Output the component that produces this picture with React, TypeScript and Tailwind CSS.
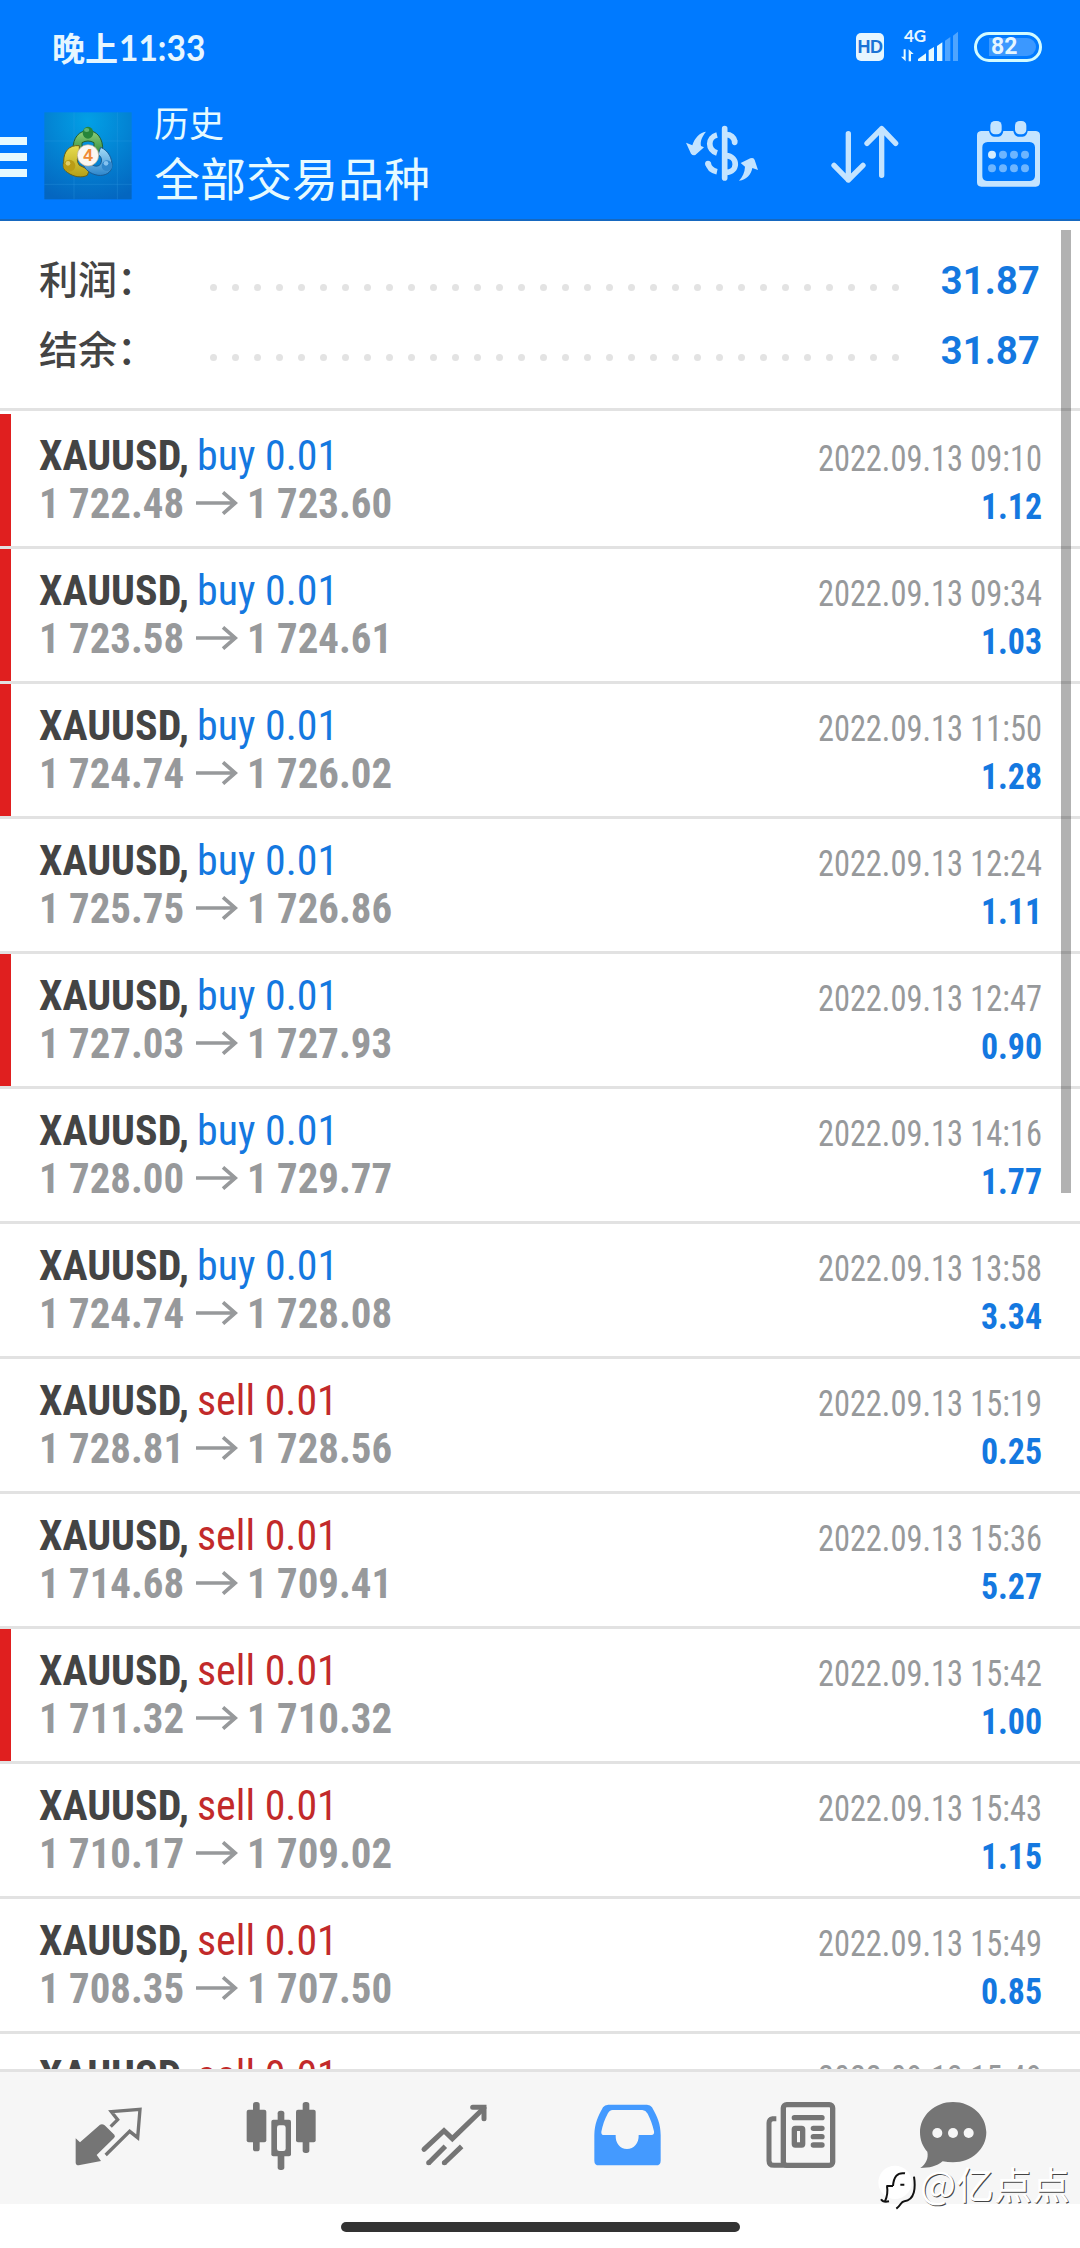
type TDeal = {
  side: "buy" | "sell";
  open: string;
  close: string;
  time: string;
  profit: string;
  marked?: boolean;
};

const deals: TDeal[] = [
  { side: "buy", open: "1 722.48", close: "1 723.60", time: "2022.09.13 09:10", profit: "1.12", marked: true },
  { side: "buy", open: "1 723.58", close: "1 724.61", time: "2022.09.13 09:34", profit: "1.03", marked: true },
  { side: "buy", open: "1 724.74", close: "1 726.02", time: "2022.09.13 11:50", profit: "1.28", marked: true },
  { side: "buy", open: "1 725.75", close: "1 726.86", time: "2022.09.13 12:24", profit: "1.11" },
  { side: "buy", open: "1 727.03", close: "1 727.93", time: "2022.09.13 12:47", profit: "0.90", marked: true },
  { side: "buy", open: "1 728.00", close: "1 729.77", time: "2022.09.13 14:16", profit: "1.77" },
  { side: "buy", open: "1 724.74", close: "1 728.08", time: "2022.09.13 13:58", profit: "3.34" },
  { side: "sell", open: "1 728.81", close: "1 728.56", time: "2022.09.13 15:19", profit: "0.25" },
  { side: "sell", open: "1 714.68", close: "1 709.41", time: "2022.09.13 15:36", profit: "5.27" },
  { side: "sell", open: "1 711.32", close: "1 710.32", time: "2022.09.13 15:42", profit: "1.00", marked: true },
  { side: "sell", open: "1 710.17", close: "1 709.02", time: "2022.09.13 15:43", profit: "1.15" },
  { side: "sell", open: "1 708.35", close: "1 707.50", time: "2022.09.13 15:49", profit: "0.85" },
  { side: "sell", open: "1 707.48", close: "1 706.90", time: "2022.09.13 15:49", profit: "0.58" },
];

function StatusBar() {
  return (
    <div className="flex h-[94px] items-start pl-[52px] pr-[38px] text-[#e6f6ff]">
      <div className="mt-[25px] flex h-[44px] w-[160px] items-center font-['Noto_Sans_CJK_SC',sans-serif] text-[33px] leading-[44px] font-bold">
        <span>晚上</span>
        <span className="ml-[1px] origin-left scale-x-[0.93] font-[Lato,sans-serif] text-[36px]">11:33</span>
      </div>
      <div className="mt-[33px] ml-auto flex h-[28px] w-[28px] items-center justify-center rounded-[5px] bg-[#e6f6ff] font-['Liberation_Sans',sans-serif] text-[18px] font-bold tracking-[-0.5px] text-[#1a73d6]">
        HD
      </div>
      <div className="mt-[29px] ml-[17px] flex h-[34px] w-[58px] flex-col font-[Lato,sans-serif]">
        <span className="ml-[3px] h-[13px] text-[17px] leading-[14px] font-bold">4G</span>
        <svg className="-mt-[13px] h-[34px] w-[58px]" viewBox="840 87 174 102">
          <g fill="#e6faff">
            <path d="M848 148h6v36l-14-14h8zM863 184v-36l15 14h-8v22z" />
            <path d="M891 183v-6l24-17v23zM923 183v-32l16-10v42zM948 183v-45l16-11v56z" />
          </g>
          <path fill="#4fa5ff" d="M972 183v-61l16-11v72zM996 183v-76l15-12v88z" />
        </svg>
      </div>
      <div className="mt-[32px] ml-[15px] flex h-[30px] w-[68px] rounded-full border-[3px] border-[#d2fbff] p-[3px]">
        <div className="ml-[9px] flex h-[18px] w-[47px] items-center rounded-l-[3px] rounded-r-full bg-[#3b98ff] pl-[2px] font-[Roboto,sans-serif] text-[23px] font-bold">
          82
        </div>
      </div>
    </div>
  );
}

function AppLogo() {
  return (
    <svg className="mt-[18px] ml-[17px] h-[88px] w-[88px]" viewBox="42 36 264 264">
      <defs>
        <radialGradient id="sky" cx="0.5" cy="0.1" r="0.95">
          <stop offset="0" stopColor="#02a0e6" />
          <stop offset="1" stopColor="#0466c0" />
        </radialGradient>
        <linearGradient id="green" x1="0" y1="0" x2="0" y2="1">
          <stop offset="0" stopColor="#8fd07a" />
          <stop offset="1" stopColor="#2e8a3a" />
        </linearGradient>
        <linearGradient id="gold" x1="0" y1="0" x2="0" y2="1">
          <stop offset="0" stopColor="#e6dc50" />
          <stop offset="1" stopColor="#b5a017" />
        </linearGradient>
        <linearGradient id="blue" x1="0" y1="0" x2="0" y2="1">
          <stop offset="0" stopColor="#a5dcf8" />
          <stop offset="1" stopColor="#2d86cc" />
        </linearGradient>
      </defs>
      <rect x="43" y="37" width="262" height="261" fill="url(#sky)" />
      <path stroke="#38a5e8" strokeOpacity="0.4" strokeWidth="2" d="M43 123h262M43 253h262M132 37v261M262 37v261" />
      <path fill="url(#green)" stroke="#225d2e" strokeWidth="3" d="M129 150C128 112 148 92 174 92S220 114 218 152C216 164 200 168 192 160V128Q174 118 156 128V150Z" />
      <path fill="url(#gold)" stroke="#66601a" strokeWidth="3" d="M148 137C116 134 101 156 101 184 98 196 100 210 112 217 132 232 156 234 172 226L178 210 148 196Q136 180 148 160Z" />
      <path fill="url(#blue)" stroke="#195b94" strokeWidth="3" d="M212 142C236 152 247 176 246 198 244 220 224 228 204 226 180 222 164 208 158 190L186 194Q202 204 212 192 220 172 204 164Z" />
      <ellipse cx="174" cy="98" rx="16" ry="18" fill="#26853a" />
      <ellipse cx="170" cy="90" rx="8" ry="6" fill="#79c98a" opacity="0.7" />
      <circle cx="118" cy="197" r="18" fill="#b99c16" />
      <circle cx="114" cy="190" r="7" fill="#efe48b" opacity="0.7" />
      <circle cx="231" cy="197" r="16" fill="#2f87cd" />
      <circle cx="228" cy="190" r="7" fill="#a8dcff" opacity="0.7" />
      <circle cx="174" cy="166" r="32" fill="#faf7f2" stroke="#b9ac93" strokeWidth="2" />
      <text x="174" y="184" textAnchor="middle" fontFamily="Liberation Sans, sans-serif" fontSize="52" fontWeight="700" fill="#f08a35">
        4
      </text>
    </svg>
  );
}

function TopBar() {
  return (
    <div className="flex h-[127px] items-start border-b-2 border-[#1668c0] pr-[38px]">
      <div className="mt-[43px] flex w-[27px] flex-col gap-[8px]">
        <div className="h-[8px] bg-[#e6faff]" />
        <div className="h-[8px] bg-[#e6faff]" />
        <div className="h-[8px] bg-[#e6faff]" />
      </div>
      <AppLogo />
      <div className="mt-[8px] ml-[22px] flex flex-col font-['Noto_Sans_CJK_SC',sans-serif] font-normal text-[#e6faff]">
        <span className="text-[35px] leading-[40px]">历史</span>
        <span className="mt-[2px] text-[46px] leading-[64px]">全部交易品种</span>
      </div>
      <svg className="mt-[29px] ml-auto h-[60px] w-[74px]" viewBox="195 369 222 180">
        <g fill="#c4e4ff">
          <path d="M258 395C246 410 240 424 243 438L252 442 226 465Q218 467 213 461L198 428 217 436C224 414 238 398 258 395Z" />
          <path d="M357 542C368 530 374 518 375 500L362 489 391 475Q401 471 404 480L414 510 397 504C393 524 380 540 357 542Z" />
        </g>
        <g fill="none" stroke="#c4e4ff" strokeWidth="17">
          <path strokeLinecap="round" d="M314 386V534" />
          <path d="M291 405C262 412 262 450 291 459M318 404Q340 404 345 426" />
          <path strokeLinecap="round" d="M344 426v1" />
          <path d="M291 515Q267 510 264 488M318 467C355 469 355 516 318 517" />
          <path strokeLinecap="round" d="M264 491v1" />
        </g>
      </svg>
      <svg className="mt-[29px] ml-[71px] h-[62px] w-[70px]" viewBox="630 369 210 186">
        <path
          fill="none"
          stroke="#c4e4ff"
          strokeWidth="16"
          strokeLinecap="round"
          strokeLinejoin="round"
          d="M685 401V540M642 496L685 540 729 496M785 526V386M741 430L785 386 827 430"
        />
      </svg>
      <svg className="mt-[25px] ml-[75px] h-[69px] w-[67px]" viewBox="1065 357 201 207">
        <path
          fill="#c4e4ff"
          fillRule="evenodd"
          d="M1083 393H1107Q1110 409 1122 410H1135Q1148 409 1150 393H1180Q1183 409 1195 410H1208Q1221 409 1223 393H1248Q1260 394 1260 406V546Q1260 560 1247 560H1084Q1071 560 1071 547V406Q1071 394 1083 393ZM1103 426Q1087 427 1087 442V528Q1087 542 1101 543H1230Q1244 542 1245 528V442Q1244 427 1229 426Z"
        />
        <rect x="1111" y="363" width="34" height="40" rx="14" fill="#c4e4ff" />
        <rect x="1185" y="363" width="34" height="40" rx="14" fill="#c4e4ff" />
        <circle cx="1116" cy="464" r="12" fill="#d6eeff" />
        <g fill="#6db5ff">
          <circle cx="1149" cy="464" r="12" />
          <circle cx="1182" cy="464" r="12" />
          <circle cx="1215" cy="464" r="12" />
          <circle cx="1116" cy="505" r="12" />
          <circle cx="1149" cy="505" r="12" />
          <circle cx="1182" cy="505" r="12" />
          <circle cx="1215" cy="505" r="12" />
        </g>
      </svg>
    </div>
  );
}

function SummaryRow({ label, value }: { label: string; value: string }) {
  return (
    <div className="flex h-[70px] items-center pr-[40px] pl-[39px]">
      <span className="mb-[4px] w-[171px] font-['Noto_Sans_CJK_SC',sans-serif] text-[39px] leading-[66px] font-medium text-[#444]">
        {label}
      </span>
      <div className="mt-[16px] flex gap-[15px]">
        {Array.from({ length: 32 }, (_, i) => (
          <span key={i} className="size-[7px] rounded-full bg-[#e3e3e3]" />
        ))}
      </div>
      <span className="mt-[4px] ml-auto font-[Roboto,sans-serif] text-[38px] font-bold tracking-[0.2px] text-[#1478e0]">
        {value}
      </span>
    </div>
  );
}

function DealRow({ side, open, close, time, profit, marked }: TDeal) {
  return (
    <div className="flex h-[135px] shrink-0 border-b-[3px] border-[#e2e2e2] font-[Roboto,sans-serif] font-stretch-condensed">
      <div className={`w-[11px] ${marked ? "bg-[#e01f1f]" : ""}`} />
      <div className="flex grow justify-between pt-[17px] pr-[38px] pl-[28px]">
        <div className="flex flex-col text-[43px] leading-[48px]">
          <div className="flex whitespace-nowrap">
            <span className="w-[158px] origin-left scale-x-[0.975] font-bold text-[#444]">XAUUSD,</span>
            <span className={`origin-left scale-x-[0.975] ${side === "buy" ? "text-[#1478e0]" : "text-[#c22a2a]"}`}>
              {side} 0.01
            </span>
          </div>
          <div className="flex font-bold whitespace-nowrap text-[#97999b]">
            <span className="w-[157px] origin-left scale-x-[0.95]">{open}</span>
            <svg className="mt-[12px] mr-[9px] h-[24px] w-[42px]" viewBox="588 780 126 72">
              <path fill="none" stroke="#97999b" strokeWidth="11" d="M588 816H706M669 784L706 816 669 848" />
            </svg>
            <span className="origin-left scale-x-[0.95]">{close}</span>
          </div>
        </div>
        <div className="flex flex-col items-end text-[36px] leading-[48px] whitespace-nowrap">
          <span className="origin-right scale-x-[0.9] pt-[4px] text-[#97999b]">{time}</span>
          <span className="origin-right scale-x-[0.94] font-bold text-[#1478e0]">{profit}</span>
        </div>
      </div>
    </div>
  );
}

function BottomNav() {
  return (
    <div className="flex h-[135px] border-t-[3px] border-[#e2e2e2] bg-[#f6f6f6] pt-[28px] pl-[73px] text-[#757575]">
      <svg className="h-[72px] w-[70px]" viewBox="219 240 210 216" fill="currentColor">
        <path d="M227 355L240 367 300 314Q307 310 314 316L343 344Q347 349 342 354L290 405 303 423 236 436Q228 436 227 428Z" />
        <path fill="none" stroke="currentColor" strokeWidth="10" strokeLinejoin="miter" d="M332 320L353 299 334 275 420 268 413 353 389 334 317 405" />
      </svg>
      <svg className="ml-[103px] h-[72px] w-[70px]" viewBox="738 240 210 216" fill="currentColor">
        <rect x="759" y="246" width="20" height="148" rx="8" />
        <rect x="740" y="269" width="59" height="98" rx="6" />
        <rect x="908" y="246" width="20" height="153" rx="8" />
        <rect x="888" y="269" width="59" height="98" rx="6" />
        <rect x="833" y="272" width="20" height="178" rx="8" />
        <rect x="814" y="299" width="59" height="110" rx="6" />
        <rect x="831" y="316" width="26" height="77" rx="7" fill="#f6f6f6" />
      </svg>
      <svg className="ml-[103px] h-[72px] w-[70px]" viewBox="177 240 210 216" fill="none" stroke="currentColor" strokeWidth="15">
        <path strokeLinecap="round" d="M192 388L252 332 277 356 372 264" />
        <path strokeLinecap="round" strokeLinejoin="miter" d="M338 262H372V296" />
        <path d="M206 429L256 379M253 429L305 379" />
        <path strokeLinecap="round" d="M206 428v0.1M253 428v0.1" />
      </svg>
      <svg className="ml-[103px] h-[72px] w-[70px]" viewBox="696 240 210 216">
        <path
          fill="#449aff"
          fillRule="evenodd"
          d="M745 254H861Q871 254 876 262C892 290 902 312 902 345V422Q902 436 888 436H717Q703 436 703 422V345C704 312 713 290 729 262Q734 254 745 254ZM758 270Q748 271 743 281C734 297 728 315 724 335Q723 345 732 345H767C766 370 780 387 801 387S837 370 836 345H874Q884 345 882 334C877 312 871 297 863 281Q857 271 847 270Z"
        />
      </svg>
      <svg className="ml-[104px] h-[72px] w-[70px]" viewBox="138 240 210 216" fill="none" stroke="currentColor">
        <rect x="190" y="254" width="148" height="182" rx="10" strokeWidth="16" />
        <path strokeWidth="15" d="M169 296H158Q147 298 147 309V422Q147 436 162 436H200" />
        <path strokeWidth="16" strokeLinecap="round" d="M223 293H306M280 325H306M280 350H306M280 375H306" />
        <rect x="223" y="325" width="25" height="50" rx="3" strokeWidth="16" />
      </svg>
      <svg className="ml-[82px] h-[72px] w-[70px]" viewBox="594 240 210 216">
        <path
          fill="currentColor"
          d="M699 246C755 246 799 287 799 337S755 427 699 427Q683 427 668 424C650 439 628 444 601 444 618 431 626 415 622 395 608 380 600 360 600 337 600 287 644 246 699 246Z"
        />
        <circle cx="652" cy="339" r="15" fill="#f6f6f6" />
        <circle cx="699" cy="339" r="15" fill="#f6f6f6" />
        <circle cx="746" cy="339" r="15" fill="#f6f6f6" />
      </svg>
    </div>
  );
}

function Watermark() {
  return (
    <div className="absolute right-[10px] bottom-[37px] flex h-[56px] items-center">
      <svg className="mt-[8px] h-[46px] w-[40px]" viewBox="470 440 120 138">
        <circle cx="524" cy="495" r="50" fill="#fff" />
        <g fill="none" stroke="#111" strokeWidth="6">
          <path d="M554 468C530 464 520 480 518 506M498 506H518M540 502H552M500 506Q504 530 494 552" />
          <path d="M581 478C586 510 584 548 552 552 540 554 544 562 528 574M482 546Q488 556 506 552" />
        </g>
      </svg>
      <span className="ml-[3px] font-['Noto_Sans_CJK_SC',sans-serif] text-[38px] leading-[56px] font-normal text-white [text-shadow:1px_1px_0_#444]">
        @亿点点
      </span>
    </div>
  );
}

export default function App() {
  return (
    <div className="relative flex h-[2248px] w-[1080px] flex-col overflow-hidden bg-white">
      <div className="h-[221px] shrink-0 bg-[#007aff]">
        <StatusBar />
        <TopBar />
      </div>
      <div className="relative flex h-[1848px] shrink-0 flex-col overflow-hidden">
        <div className="h-[190px] shrink-0 border-b-[3px] border-[#e2e2e2] pt-[23px]">
          <SummaryRow label="利润：" value="31.87" />
          <SummaryRow label="结余：" value="31.87" />
        </div>
        <div className="flex flex-col pt-[3px]">
          {deals.map((deal, i) => (
            <DealRow key={i} {...deal} />
          ))}
        </div>
        <div className="absolute top-[9px] right-[9px] h-[963px] w-[10px] bg-black/30" />
      </div>
      <BottomNav />
      <div className="flex justify-center pt-[18px]">
        <div className="h-[10px] w-[399px] rounded-full bg-[#333]" />
      </div>
      <Watermark />
    </div>
  );
}
